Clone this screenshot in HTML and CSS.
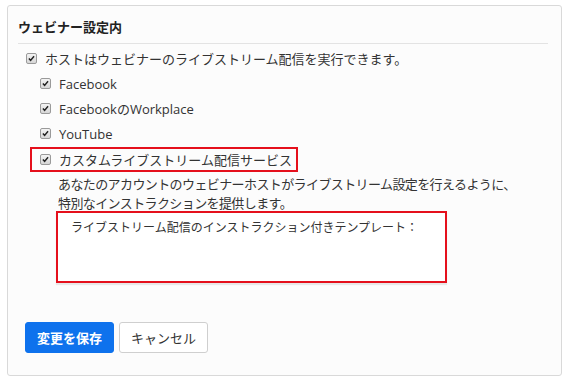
FILE: index.html
```html
<!DOCTYPE html>
<html lang="ja">
<head>
  <meta charset="UTF-8" />
  <title>ウェビナー設定</title>
  <link rel="stylesheet" href="styles.css">
</head>
<body>
  <div class="panel">
    <h3 class="panel-title">ウェビナー設定内</h3>

    <div class="row main-row">
      <span class="cb"><svg viewBox="0 0 11 11"><path d="M2.3 5.6 L4.4 7.8 L8.6 2.8" /></svg></span>
      <span>ホストはウェビナーのライブストリーム配信を実行できます。</span>
    </div>
    <div class="row sub-row">
      <span class="cb"><svg viewBox="0 0 11 11"><path d="M2.3 5.6 L4.4 7.8 L8.6 2.8" /></svg></span>
      <span>Facebook</span>
    </div>
    <div class="row sub-row">
      <span class="cb"><svg viewBox="0 0 11 11"><path d="M2.3 5.6 L4.4 7.8 L8.6 2.8" /></svg></span>
      <span>FacebookのWorkplace</span>
    </div>
    <div class="row sub-row">
      <span class="cb"><svg viewBox="0 0 11 11"><path d="M2.3 5.6 L4.4 7.8 L8.6 2.8" /></svg></span>
      <span>YouTube</span>
    </div>
    <div class="row sub-row highlight">
      <span class="cb"><svg viewBox="0 0 11 11"><path d="M2.3 5.6 L4.4 7.8 L8.6 2.8" /></svg></span>
      <span>カスタムライブストリーム配信サービス</span>
    </div>

    <p class="desc">あなたのアカウントのウェビナーホストがライブストリーム設定を行えるように、<br>特別なインストラクションを提供します。</p>

    <div class="template-box">ライブストリーム配信のインストラクション付きテンプレート：</div>

    <div class="actions">
      <button class="btn btn-primary">変更を保存</button>
      <button class="btn btn-default">キャンセル</button>
    </div>
  </div>
</body>
</html>
```

FILE: styles.css
```css
body {
  margin: 0;
  background: #fff;
  font-family: "Open Sans", "Noto Sans CJK JP", sans-serif;
  font-size: 13px;
  color: #333;
}

.panel {
  margin: 5px 0 0 7px;
  width: 555px;
  height: 371px;
  box-sizing: border-box;
  border: 1px solid #d9d9d9;
  border-radius: 3px;
  background: #fcfcfc;
  padding: 0 13px 0 10px;
}

.panel-title {
  margin: 0;
  padding: 12px 0 7px 0;
  line-height: 18px;
  font-size: 13px;
  font-weight: bold;
  color: #222;
  border-bottom: 1px solid #e3e3e3;
}

.row {
  display: flex;
  align-items: center;
  height: 25px;
}

.main-row {
  margin-top: 2px;
  padding-left: 8px;
}

.sub-row {
  padding-left: 22px;
}

.cb {
  width: 9px;
  height: 9px;
  border: 1px solid #9a9a9a;
  border-radius: 2px;
  background: linear-gradient(#f4f4f4, #d6d6d6);
  margin-right: 8px;
  display: flex;
}

.cb svg {
  width: 9px;
  height: 9px;
  fill: none;
  stroke: #222;
  stroke-width: 1.8;
}

.highlight {
  width: 268px;
  box-sizing: border-box;
  margin: 1px 0 0 12px;
  padding-left: 8px;
  height: 25px;
  border: 2px solid #e5101c;
}

.desc {
  margin: 3px 0 0 40px;
  line-height: 19px;
  letter-spacing: -0.6px;
}

.template-box {
  margin: -2px 0 0 38px;
  width: 391px;
  height: 72px;
  box-sizing: border-box;
  border: 2px solid #e5101c;
  background: #fff;
  padding: 7px 0 0 13px;
  line-height: 16px;
  font-size: 12px;
  box-shadow: 0 2px 1px rgba(0, 0, 0, 0.08);
}

.actions {
  display: flex;
  gap: 5px;
  margin: 39px 0 0 7px;
}

.btn {
  height: 31px;
  padding: 0 11px;
  border-radius: 3px;
  font-family: inherit;
  font-size: 13px;
  cursor: pointer;
}

.btn-primary {
  background: #0e72ed;
  border: 1px solid #0e72ed;
  color: #fff;
  font-weight: bold;
}

.btn-default {
  background: #fff;
  border: 1px solid #cfcfcf;
  color: #333;
}
```
